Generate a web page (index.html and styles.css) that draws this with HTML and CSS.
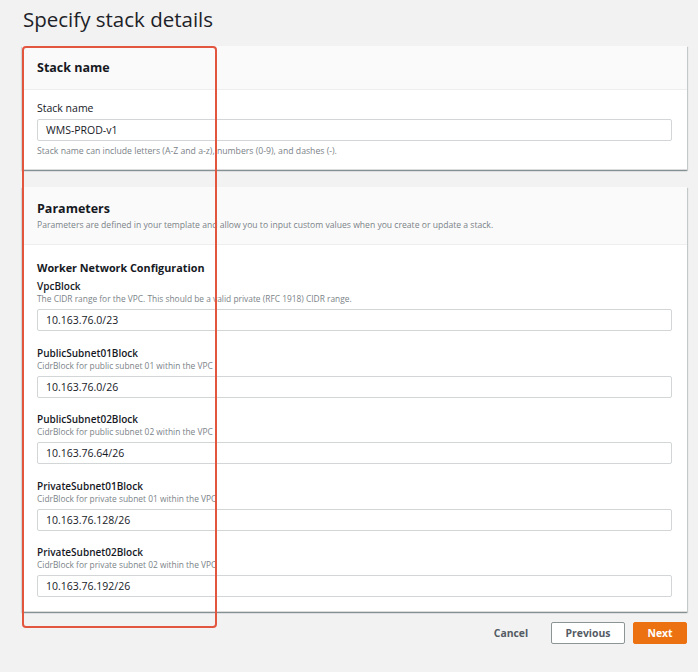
FILE: index.html
```html
<!DOCTYPE html>
<html lang="en">
<head>
<meta charset="utf-8">
<title>Specify stack details</title>
<link rel="stylesheet" href="styles.css">
</head>
<body>
<div class="page">
  <h1 class="title">Specify stack details</h1>

  <section class="card">
    <div class="card-header card-header-single">
      <h2 class="card-title">Stack name</h2>
    </div>
    <div class="card-body card-body-stack">
      <div class="label">Stack name</div>
      <div class="input">WMS-PROD-v1</div>
      <div class="help">Stack name can include letters (A-Z and a-z), numbers (0-9), and dashes (-).</div>
    </div>
  </section>

  <section class="card card-params">
    <div class="card-header card-header-params">
      <h2 class="card-title">Parameters</h2>
      <div class="card-desc">Parameters are defined in your template and allow you to input custom values when you create or update a stack.</div>
    </div>
    <div class="card-body card-body-params">
      <h3 class="group-title">Worker Network Configuration</h3>
      <div class="fields">
        <div class="field">
          <div class="field-label">VpcBlock</div>
          <div class="field-desc">The CIDR range for the VPC. This should be a valid private (RFC 1918) CIDR range.</div>
          <div class="input">10.163.76.0/23</div>
        </div>
        <div class="field">
          <div class="field-label">PublicSubnet01Block</div>
          <div class="field-desc">CidrBlock for public subnet 01 within the VPC</div>
          <div class="input">10.163.76.0/26</div>
        </div>
        <div class="field">
          <div class="field-label">PublicSubnet02Block</div>
          <div class="field-desc">CidrBlock for public subnet 02 within the VPC</div>
          <div class="input">10.163.76.64/26</div>
        </div>
        <div class="field">
          <div class="field-label">PrivateSubnet01Block</div>
          <div class="field-desc">CidrBlock for private subnet 01 within the VPC</div>
          <div class="input">10.163.76.128/26</div>
        </div>
        <div class="field">
          <div class="field-label">PrivateSubnet02Block</div>
          <div class="field-desc">CidrBlock for private subnet 02 within the VPC</div>
          <div class="input">10.163.76.192/26</div>
        </div>
      </div>
    </div>
  </section>

  <div class="actions">
    <button class="btn btn-link">Cancel</button>
    <button class="btn btn-normal">Previous</button>
    <button class="btn btn-primary">Next</button>
  </div>

  <div class="highlight"></div>
</div>
</body>
</html>
```

FILE: styles.css
```css
* { box-sizing: border-box; }

html, body {
  margin: 0;
  padding: 0;
  background: #f2f2f2;
}

body {
  font-family: "Open Sans", "Noto Sans", "Liberation Sans", sans-serif;
  color: #16191f;
  width: 698px;
  height: 672px;
  overflow: hidden;
}

.page {
  position: relative;
  padding: 6px 11px 0 22px;
}

.title {
  margin: 0 0 0 1px;
  font-size: 20.5px;
  line-height: 26px;
  font-weight: 400;
  color: #1d2228;
  height: 40px;
}

.card {
  background: #ffffff;
  box-shadow: 0 1px 1px 0 rgba(0, 28, 36, 0.3), 1px 1px 1px 0 rgba(0, 28, 36, 0.15), -1px 1px 1px 0 rgba(0, 28, 36, 0.08);
  border-bottom: 1px solid #dcdcdc;
}

.card-params {
  margin-top: 17px;
}

.card-header {
  background: #fafafa;
  border-bottom: 1px solid #eeeeee;
  padding: 0 15px;
}

.card-header-single {
  height: 44px;
  display: flex;
  align-items: center;
}

.card-header-params {
  padding-top: 14px;
  padding-bottom: 13px;
}

.card-title {
  margin: 0;
  font-size: 12.5px;
  line-height: 16px;
  font-weight: 700;
  color: #16191f;
}

.card-desc {
  margin-top: 2px;
  font-size: 8.6px;
  line-height: 12px;
  color: #7b8388;
}

.card-body {
  padding: 0 15px;
}

.card-body-stack {
  padding-top: 11px;
  padding-bottom: 12px;
}

.label {
  font-size: 10.5px;
  line-height: 14px;
  color: #16191f;
}

.input {
  margin-top: 4px;
  height: 22px;
  border: 1px solid #d2d6d6;
  border-radius: 2px;
  background: #fff;
  padding: 0 8px;
  font-size: 10.5px;
  line-height: 20px;
  color: #16191f;
}

.help {
  margin-top: 4px;
  font-size: 8.7px;
  line-height: 12px;
  color: #7b8388;
}

.card-body-params {
  padding-top: 16px;
  padding-bottom: 14px;
}

.group-title {
  margin: 0;
  font-size: 10.8px;
  line-height: 14px;
  font-weight: 700;
  color: #16191f;
}

.fields {
  margin-top: 5px;
  display: flex;
  flex-direction: column;
  gap: 15.5px;
}

.field-label {
  font-size: 10px;
  line-height: 13px;
  font-weight: 600;
  color: #16191f;
}

.field-desc {
  font-size: 8.4px;
  line-height: 12px;
  color: #7b8388;
}

.actions {
  margin-top: 10px;
  display: flex;
  justify-content: flex-end;
  align-items: center;
  gap: 8px;
}

.btn {
  font-family: inherit;
  font-size: 10.4px;
  font-weight: 700;
  height: 22px;
  line-height: 20px;
  border-radius: 2px;
  padding: 0;
  cursor: pointer;
}

.btn-link {
  background: transparent;
  border: 1px solid transparent;
  color: #545b64;
  width: 48px;
  margin-right: 8px;
}

.btn-normal {
  background: #fff;
  border: 1px solid #8d9496;
  color: #545b64;
  width: 74px;
}

.btn-primary {
  background: #ec7211;
  border: 1px solid #ec7211;
  color: #fff;
  width: 54px;
}

.highlight {
  position: absolute;
  left: 22px;
  top: 46px;
  width: 195px;
  height: 582px;
  border: 2px solid #e2553f;
  border-radius: 4px;
  pointer-events: none;
}
```
